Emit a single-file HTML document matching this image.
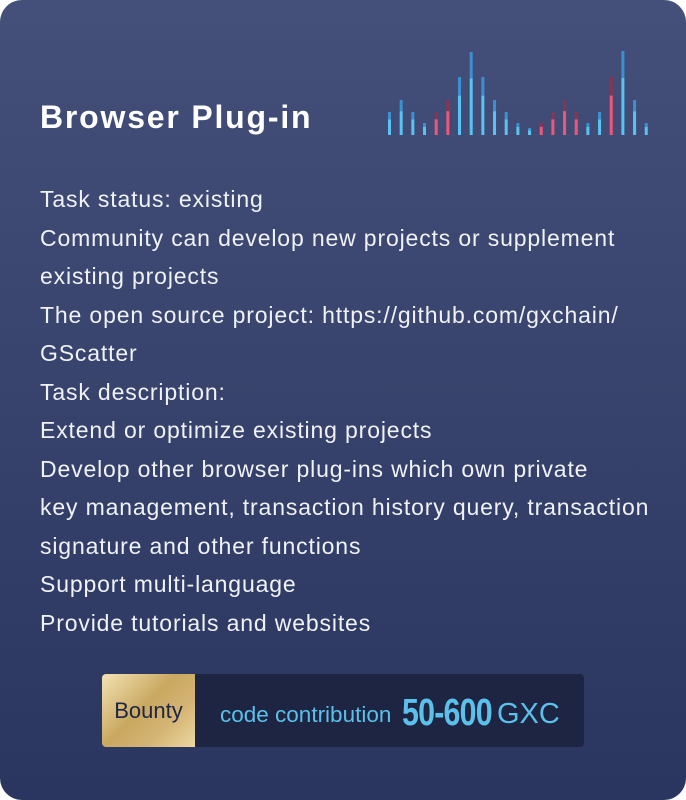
<!DOCTYPE html>
<html><head><style>
html,body{margin:0;padding:0;background:#fff;}
.card{position:absolute;left:0;top:0;width:686px;height:800px;border-radius:22px;background:linear-gradient(180deg,#44507a 0%,#37436c 50%,#2a3560 100%);overflow:hidden;font-family:"Liberation Sans",sans-serif;color:#fff;}
.title{position:absolute;left:40px;top:99px;font-size:32px;font-weight:bold;letter-spacing:1.8px;}
.txt{position:absolute;left:40px;top:180px;font-size:23px;line-height:38.5px;color:#f0f2f7;letter-spacing:0.85px;white-space:nowrap;}
.bounty{position:absolute;left:102px;top:674px;width:482px;height:73px;border-radius:4px;background:#1d2542;overflow:hidden;}
.gold{position:absolute;left:0;top:0;width:93px;height:73px;background:linear-gradient(135deg,#f3e2b4 0%,#c9a860 45%,#d4b474 70%,#ecd7a0 100%);color:#1e2545;font-size:22px;line-height:73px;text-align:center;}
.t{position:absolute;white-space:nowrap;color:#5bc0ea;}
</style></head><body>
<div class="card">
<div class="title">Browser Plug-in</div>
<svg style="position:absolute;left:0;top:0" width="686" height="160">
<g id="bars"></g>
</svg>
<div class="txt">Task status: existing<br>Community can develop new projects or supplement<br>existing projects<br>The open source project: https://github.com/gxchain/<br>GScatter<br>Task description:<br>Extend or optimize existing projects<br>Develop other browser plug-ins which own private<br>key management, transaction history query, transaction<br>signature and other functions<br>Support multi-language<br>Provide tutorials and websites</div>
<div class="bounty"><div class="gold">Bounty</div>
<div class="t" style="left:118px;top:28px;font-size:22.5px;line-height:26px;">code contribution</div>
<div class="t" style="left:300px;top:18px;font-size:38px;line-height:42px;font-weight:bold;transform:scaleX(0.8);transform-origin:0 0;letter-spacing:-1px;">50-600</div>
<div class="t" style="left:395px;top:23px;font-size:29px;line-height:34px;">GXC</div>
</div>
</div>
<script>
var tops=[112,100,112,123,112,100,77,52,77,100,112,123,128,123,112,100,112,123,112,77,51,100,123];
var red=[0,0,0,0,1,1,0,0,0,0,0,0,0,1,1,1,1,0,0,1,0,0,0];
var g=document.getElementById('bars'),s='';
for(var i=0;i<tops.length;i++){var x=388+i*11.67,t=tops[i],h=135-t,m=t+h*0.32;
var c1=red[i]?'#8a3550':'#3c8fd0',c2=red[i]?'#f0567a':'#58c4f2';
s+='<rect x="'+x+'" y="'+t+'" width="3" height="'+(m-t)+'" fill="'+c1+'"/><rect x="'+x+'" y="'+m+'" width="3" height="'+(135-m)+'" fill="'+c2+'"/>';}
g.innerHTML=s;
</script>
</body></html>
